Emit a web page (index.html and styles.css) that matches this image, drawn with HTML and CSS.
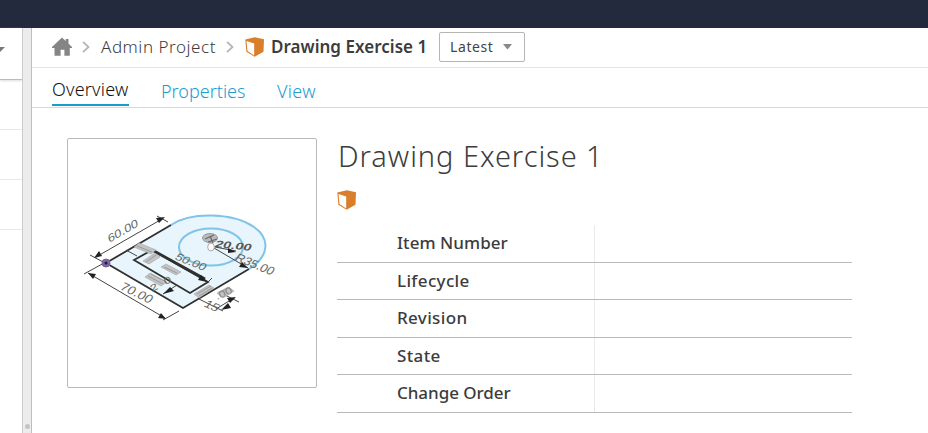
FILE: index.html
```html
<!DOCTYPE html>
<html lang="en">
<head>
<meta charset="utf-8">
<title>Drawing Exercise 1</title>
<link rel="stylesheet" href="styles.css">
</head>
<body>
<svg class="defs" aria-hidden="true">
  <symbol id="cube" viewBox="0 0 20 20"><path fill="#d97e2b" d="M.3 2.600 9.800.2l9.200 2-.5 12.500-8.900 5-8.200-5z"/><path fill="#fff" d="M1.500 4 9.200 6.600v11.800l-6.700-4.400z"/></symbol>
  <symbol id="chevron" viewBox="0 0 8 12"><path fill="none" stroke="#b5b5b5" stroke-width="1.800" d="m1 .8 5.500 5.200L1 11.200"/></symbol>
</svg>
<header class="topbar"></header>
<div class="workspace">
  <aside class="sidebar">
    <div class="sidebar-tool"><svg width="5" height="6"><path fill="#777" d="M0 0h5L0 5z"/></svg></div>
    <div class="sidebar-row"></div><div class="sidebar-row"></div><div class="sidebar-row"></div>
  </aside>
  <div class="splitter"><span class="grip"></span></div>
  <main class="content">
    <nav class="breadcrumb">
      <svg class="home" viewBox="0 0 20 19"><path fill="#858585" d="M10 .5 13.700 4V2H16.500v4.600L20 10v1h-2.200v7.700H12v-5H9v5H2.500V11H0v-1z"/><path fill="#fff" d="M8.600 12.800h3.800v5.900h-1.200v-4.500H9.700v4.500H8.600z"/></svg>
      <svg class="chevron first"><use href="#chevron"/></svg>
      <span class="crumb">Admin Project</span>
      <svg class="chevron second"><use href="#chevron"/></svg>
      <svg class="cube"><use href="#cube"/></svg>
      <span class="crumb current">Drawing Exercise 1</span>
      <button class="version"><span>Latest</span><svg width="9" height="6"><path fill="#888" d="M0 0h9L4.500 5.500z"/></svg></button>
    </nav>
    <div class="tabs">
      <span class="tab active">Overview</span>
      <span class="tab properties">Properties</span>
      <span class="tab view">View</span>
    </div>
    <div class="overview">
      <div class="thumbnail">
        <svg viewBox="68 139 248 248" width="248" height="248">
          <path fill="#e8f5fc" d="M106 263 171 225C190 212 232 212 254 227 270 238 270 256 249 269L183 308z"/>
          <g fill="none" stroke="#7fc4e8" stroke-width="2"><path d="M171 225C190 212 232 212 254 227 270 238 270 256 249 269"/><ellipse cx="211" cy="247" rx="32" ry="18.500"/></g>
          <g fill="none" stroke="#303030" stroke-width="1.800"><path d="M171 225 106 263 183 308 249 269"/><path d="M134 260 152 250 208 282 190 293z"/><path d="m154 251 51 28" stroke-width="2.800"/></g>
          <g fill="none" stroke="#444" stroke-width="1"><path d="m96 257 66-38M90 255l15 8M157 216l11 6M88 273l77 45M84 274l20-11M163 320l16-9M214 248l34 20M215 247l21 4M216 309l18-11M199 299l24 12M225 295l14 7M126 250l11 6M208 282l4-4M163 294l14-9"/></g>
          <g fill="#222"><path d="m94 258 8-2-3-5zM165 217l-9 1 3 5zM88 273l8 1-3 5zM166 319l-8-1 3-5zM248 268l-9-1 3-5zM236 252l-8-4v5zM221 310l10-2-3-5zM236 297l-9 1 3 5zM163 294l11-3-4-4zM207 282l-9-2 3-5z"/></g>
          <g fill="#c4c4c4" stroke="#999" stroke-width=".5"><path d="m143 261 12-8 5 4-11 7zM161 267l5-3 15 8-5 3zM145 277l5-4 17 9-6 4zM194 294l15-9 5 3-15 10zM134 247l5-4 17 7-5 4zM217 293l11-6 6 4-11 7z"/></g>
          <g fill="none" stroke="#888" stroke-width=".7"><path d="m164 267 13 6M148 276l15 8M197 294l14-8M146 262l10-7M137 246l15 6M151 274l13 7M199 296l13-8M219 293l11-6"/></g>
          <ellipse cx="210" cy="238" rx="7.500" ry="4.500" fill="#bbb" stroke="#999"/><path stroke="#666" stroke-width="1.200" d="m205 239 9-4M208 242l9-3M210 236l3 7"/>
          <ellipse cx="211" cy="247" rx="3.300" ry="4" fill="#fff" stroke="#aaa"/>
          <circle cx="106" cy="263" r="4" fill="#7d62a9" stroke="#75618f"/><circle cx="106" cy="263" r="1.500" fill="#211a29"/>
          <g class="dimensions">
            <text textLength="34" lengthAdjust="spacingAndGlyphs" transform="matrix(.87 -.5 .2 .8 109 243)">60.00</text>
            <text textLength="35" lengthAdjust="spacingAndGlyphs" transform="matrix(.87 .42 -.55 .75 119 289)">70.00</text>
            <text textLength="34" lengthAdjust="spacingAndGlyphs" transform="matrix(.87 .35 -.5 .65 174 259)">50.00</text>
            <text class="strong" textLength="37" lengthAdjust="spacingAndGlyphs" transform="matrix(.98 .1 -.3 .7 214 247)">20.00</text>
            <text textLength="43" lengthAdjust="spacingAndGlyphs" transform="matrix(.87 .36 -.5 .75 234 260)">R35.00</text>
            <text textLength="23" transform="matrix(.87 -.45 .3 .65 152 292)">20</text>
            <text transform="matrix(.87 .4 -.55 .7 203 306)">15</text>
            <text class="faded" transform="matrix(.87 -.4 .3 .65 217 300)">.00</text>
          </g>
        </svg>
      </div>
      <section class="details">
        <h1>Drawing Exercise 1</h1>
        <svg class="cube item-icon"><use href="#cube"/></svg>
        <div class="properties-table">
          <div class="property"><span class="label item">Item Number</span><span class="value"></span></div>
          <div class="property"><span class="label">Lifecycle</span><span class="value"></span></div>
          <div class="property"><span class="label">Revision</span><span class="value"></span></div>
          <div class="property"><span class="label">State</span><span class="value"></span></div>
          <div class="property"><span class="label order">Change Order</span><span class="value"></span></div>
        </div>
      </section>
    </div>
  </main>
</div>
</body>
</html>
```
FILE: styles.css
```css
* { box-sizing: border-box; }
body { margin: 0; height: 433px; overflow: hidden; display: flex; flex-direction: column; background: #fff; color: #3c3c3c; font-family: "Noto Sans", sans-serif; }
.defs { position: absolute; width: 0; height: 0; }
.topbar { height: 28px; background: #232a3e; flex: none; }
.workspace { flex: 1; display: flex; }
.sidebar { width: 22px; flex: none; }
.sidebar-tool { height: 52px; padding-top: 19px; border-bottom: 1px solid #bbb; box-shadow: 0 1px 2px #ddd; }
.sidebar-tool svg { display: block; }
.sidebar-row { height: 50px; border-bottom: 1px solid #e8e8e8; }
.splitter { width: 10px; flex: none; background: #ececec; border-left: 1px solid #ccc; border-right: 1px solid #bebebe; display: flex; align-items: flex-end; justify-content: center; padding-bottom: 4px; }
.grip { width: 5px; height: 5px; border-radius: 50%; background: #c4c4c4; }
.content { flex: 1; min-width: 0; }
.breadcrumb { height: 40px; border-bottom: 1px solid #e4e4e4; display: flex; align-items: center; padding: 0 0 2px 20px; }
.breadcrumb > * { flex: none; }
.home { width: 20px; height: 19px; }
.chevron { width: 8px; height: 12px; }
.first { margin: 0 11px 0 10px; }
.second { margin: 0 11px 0 10px; }
.crumb { width: 115px; font-size: 17px; line-height: 24px; white-space: nowrap; font-weight: 300; letter-spacing: .55px; }
.cube { display: block; width: 20px; height: 20px; }
.current { width: 157px; margin-left: 6px; font-weight: 600; letter-spacing: .03px; }
.version { width: 86px; height: 30px; margin-left: 11px; padding: 0 12px 0 10px; display: flex; align-items: center; justify-content: space-between; border: 1px solid #b5b5b5; border-radius: 2px; background: #fff; font: 400 14px "Noto Sans", sans-serif; color: #444; letter-spacing: .6px; }
.tabs { height: 40px; border-bottom: 1px solid #d8d8d8; display: flex; padding-left: 20px; font-size: 18px; font-weight: 300; line-height: 24px; }
.tab { height: 28px; margin-top: 11px; color: #249bcf; white-space: nowrap; }
.active { height: 29px; margin-top: 9px; width: 77px; border-bottom: 2px solid #159dcc; color: #111; letter-spacing: .2px; }
.properties { width: 85px; margin-left: 32px; }
.view { margin-left: 31px; letter-spacing: .3px; }
.overview { display: flex; padding: 30px 0 0 35px; }
.thumbnail { width: 250px; height: 250px; border: 1px solid #b9b9b9; border-radius: 2px; }
.thumbnail svg { display: block; }
.dimensions { font: 13.5px "Liberation Sans", sans-serif; fill: #666; }
.strong { font-weight: bold; fill: #555; }
.faded { fill: #888; }
.details { width: 515px; margin-left: 20px; }
h1 { margin: 0; height: 52px; padding-left: 1px; font-size: 29px; line-height: 36px; font-weight: 300; letter-spacing: .95px; white-space: nowrap; }
.item-icon { margin-bottom: 15px; }
.property { height: 37.5px; display: flex; border-bottom: 1px solid #b9b9b9; }
.label { width: 258px; padding-left: 60px; line-height: 36px; font-size: 17px; font-weight: 500; letter-spacing: .35px; border-right: 1px solid #e9e9e9; white-space: nowrap; }
.item { letter-spacing: .05px; }
.order { letter-spacing: -.05px; }
```
